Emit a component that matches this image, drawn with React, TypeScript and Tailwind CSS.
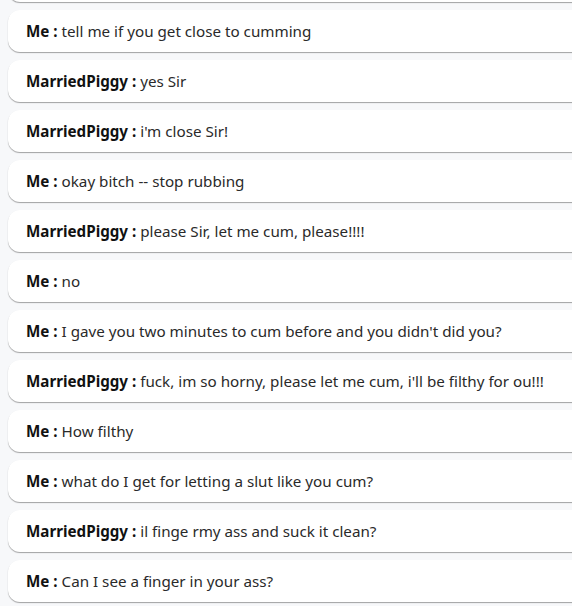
const messages: [string, string][] = [
  ["Me", "tell me if you get close to cumming"],
  ["MarriedPiggy", "yes Sir"],
  ["MarriedPiggy", "i'm close Sir!"],
  ["Me", "okay bitch -- stop rubbing"],
  ["MarriedPiggy", "please Sir, let me cum, please!!!!"],
  ["Me", "no"],
  ["Me", "I gave you two minutes to cum before and you didn't did you?"],
  ["MarriedPiggy", "fuck, im so horny, please let me cum, i'll be filthy for ou!!!"],
  ["Me", "How filthy"],
  ["Me", "what do I get for letting a slut like you cum?"],
  ["MarriedPiggy", "il finge rmy ass and suck it clean?"],
  ["Me", "Can I see a finger in your ass?"],
];

const card =
  "flex h-[42px] items-center rounded-l-xl bg-white pl-[18px] shadow-[0_1px_1px_rgba(0,0,0,0.35)]";

export default function App() {
  return (
    <div
      className="h-[606px] w-[572px] overflow-hidden bg-[#f7f8fa] text-[15.2px] text-[#2a2a2a]"
      style={{ fontFamily: '"Noto Sans", "Open Sans", sans-serif' }}
    >
      <div className="-mt-[40px] flex flex-col gap-2 pl-2 -mr-6">
        {/* tail of the previous message, scrolled out of view */}
        <div className={card} />
        {messages.map(([who, text], i) => (
          <div key={i} className={card}>
            <span className="whitespace-nowrap">
              <span className="font-bold text-[#111]">{who} :</span> {text}
            </span>
          </div>
        ))}
      </div>
    </div>
  );
}
